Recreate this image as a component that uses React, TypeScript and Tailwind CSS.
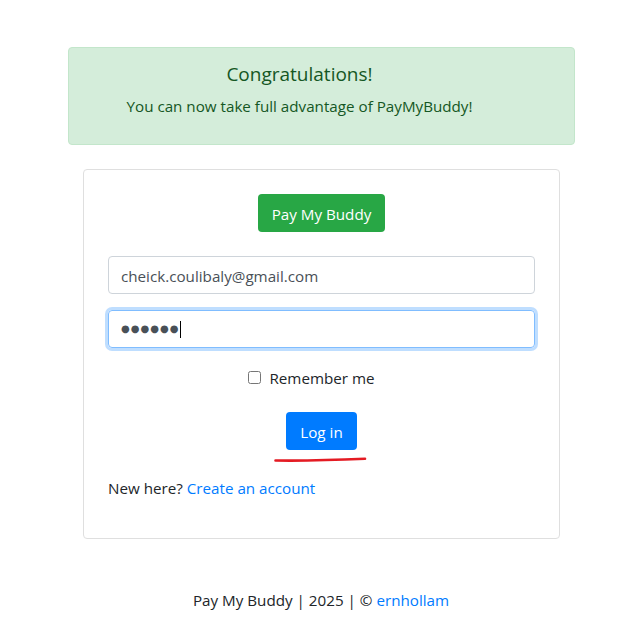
export default function App() {
    return (
        <div className="min-h-[632px] bg-white text-[#212529] text-[15.2px] leading-6 font-['Open_Sans',sans-serif]">
            <div className="pt-[47px] ml-[68px] w-[507px]">
                {/* Success alert */}
                <div className="border border-[#c3e6cb] bg-[#d4edda] text-[#155724] rounded pl-5 pr-16 pt-[14px] pb-[10px] text-center">
                    <h4 className="text-[19px] leading-6 mb-2">Congratulations!</h4>
                    <p className="mb-4">You can now take full advantage of PayMyBuddy!</p>
                </div>

                {/* Login card */}
                <div className="mt-6 ml-[15px] w-[477px] border border-[#dfdfdf] rounded p-6 pb-[38px]">
                    <div className="flex justify-center">
                        <span className="bg-[#28a745] text-white rounded px-[14px] pt-[2px] h-[38px] flex items-center">Pay My Buddy</span>
                    </div>

                    <input
                        readOnly
                        value="cheick.coulibaly@gmail.com"
                        className="mt-6 block w-full h-[38px] px-3 pt-[2px] border border-[#ced4da] rounded text-[#495057] outline-none"
                    />

                    <div className="mt-4 h-[38px] flex items-center px-3 border border-[#80bdff] rounded shadow-[0_0_0_3px_rgba(0,123,255,0.25)] text-[#495057]">
                        <span className="font-['DejaVu_Sans',sans-serif] text-[10px] tracking-[1px]">●●●●●●</span>
                        <span className="w-px h-[17px] bg-black ml-px" />
                    </div>

                    <label className="mt-4 pt-[2px] pr-5 flex items-center justify-center gap-2">
                        <input type="checkbox" className="w-[13px] h-[13px] mb-[1px]" />
                        <span>Remember me</span>
                    </label>

                    <div className="mt-[22px] flex justify-center">
                        <div className="relative">
                            <button className="bg-[#007bff] text-white rounded px-[14px] pt-[2px] h-[38px]">Log in</button>
                            <svg className="absolute left-[-12px] top-[45px]" width="94" height="6" viewBox="0 0 94 6">
                                <path d="M1.5 3.5 Q40 4 91 1.8" stroke="#e41b23" strokeWidth="2.6" fill="none" strokeLinecap="round" />
                            </svg>
                        </div>
                    </div>

                    <p className="mt-[26px]">
                        New here? <a className="text-[#007bff]">Create an account</a>
                    </p>
                </div>
            </div>

            <footer className="mt-[49px] text-center pl-px">
                Pay My Buddy | 2025 | © <a className="text-[#007bff]">ernhollam</a>
            </footer>
        </div>
    );
}
